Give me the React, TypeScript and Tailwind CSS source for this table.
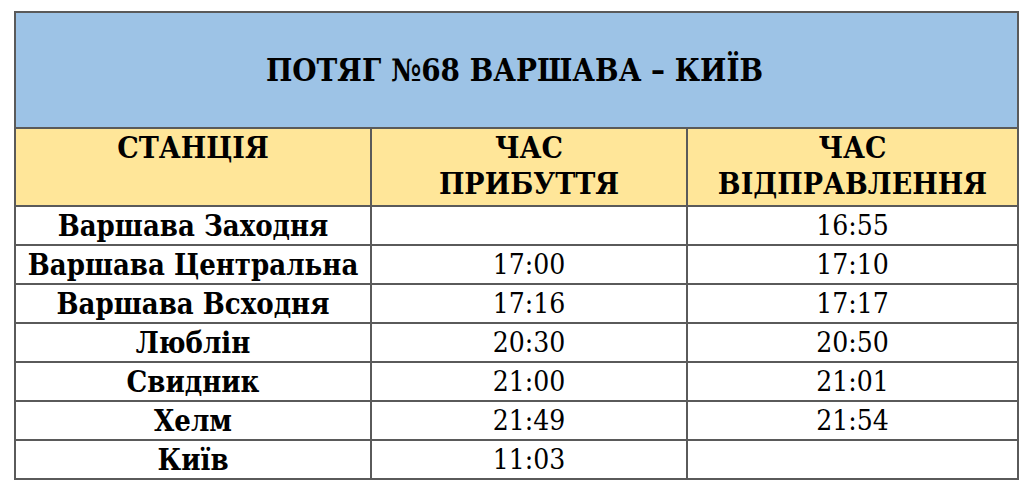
import React from 'react';

const rows: [string, string, string][] = [
  ['Варшава Заходня', '', '16:55'],
  ['Варшава Центральна', '17:00', '17:10'],
  ['Варшава Всходня', '17:16', '17:17'],
  ['Люблін', '20:30', '20:50'],
  ['Свидник', '21:00', '21:01'],
  ['Хелм', '21:49', '21:54'],
  ['Київ', '11:03', ''],
];

const border = 'border-[#5a5a5a]';

export default function App() {
  return (
    <div className="w-[1029px] h-[492px] bg-white pt-[11px] pl-[14px] text-black font-['DejaVu_Serif_Condensed','DejaVu_Serif',serif]">
      <div className={`w-[1005px] border-2 ${border} flex flex-col`}>
        <div className="h-[114px] bg-[#9dc3e6] flex items-center justify-center pr-[4px] text-[31px] font-bold">
          ПОТЯГ №68 ВАРШАВА – КИЇВ
        </div>
        <div className={`grid grid-cols-[354px_316px_1fr] h-[78px] bg-[#ffe699] border-t-2 ${border} text-[30px] font-bold leading-[36px] text-center`}>
          <div className="pt-[1px]">СТАНЦІЯ</div>
          <div className={`pt-[1px] border-l-2 ${border}`}>
            ЧАС
            <br />
            ПРИБУТТЯ
          </div>
          <div className={`pt-[1px] border-l-2 ${border}`}>
            ЧАС
            <br />
            ВІДПРАВЛЕННЯ
          </div>
        </div>
        {rows.map(([station, arr, dep]) => (
          <div key={station} className={`grid grid-cols-[354px_316px_1fr] h-[39px] border-t-2 ${border} text-[28px] leading-[38px] text-center`}>
            <div className="font-bold text-[29px]">{station}</div>
            <div className={`border-l-2 ${border}`}>{arr}</div>
            <div className={`border-l-2 ${border}`}>{dep}</div>
          </div>
        ))}
      </div>
    </div>
  );
}
